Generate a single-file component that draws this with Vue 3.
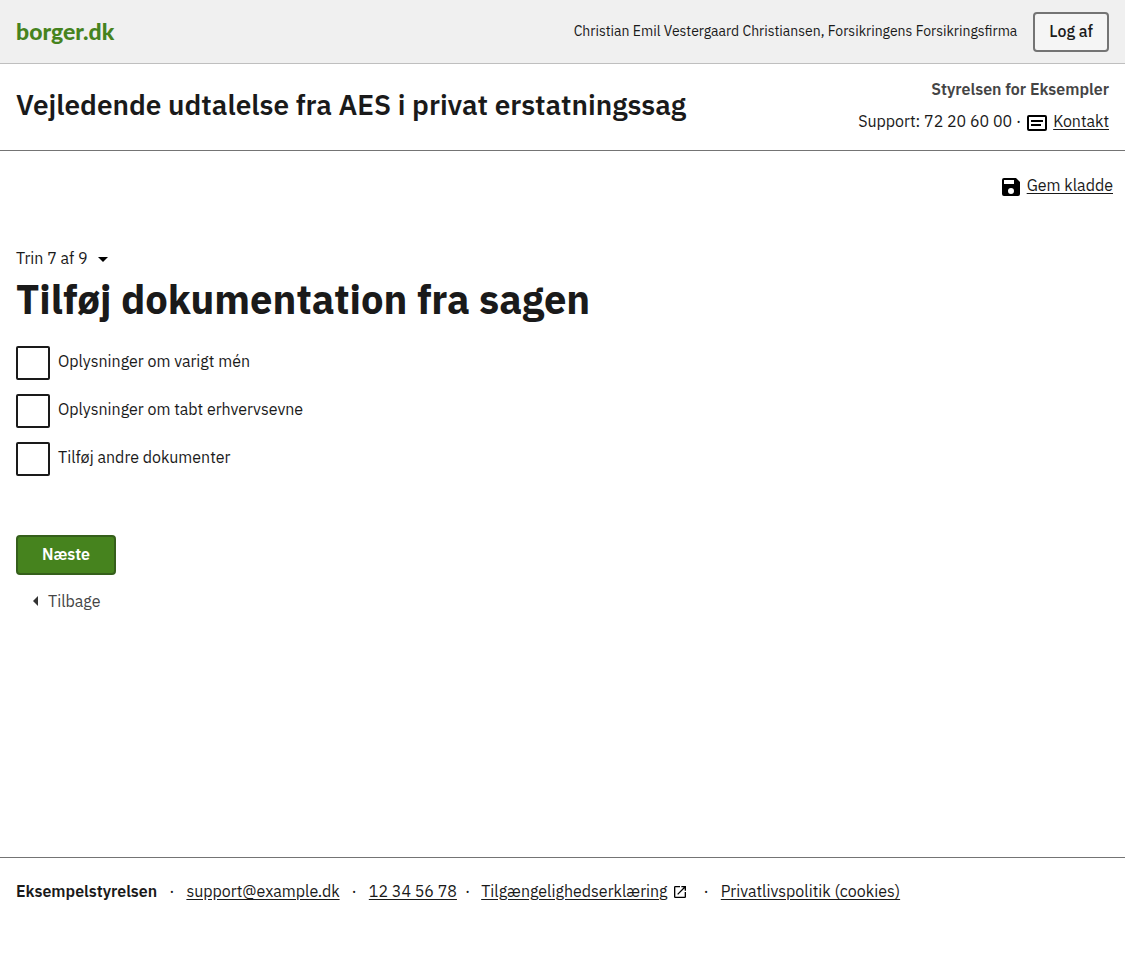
<script setup>
import { ref } from 'vue'

const options = ref([
  { id: 'men', label: 'Oplysninger om varigt mén', checked: false },
  { id: 'erhverv', label: 'Oplysninger om tabt erhvervsevne', checked: false },
  { id: 'andre', label: 'Tilføj andre dokumenter', checked: false },
])
</script>

<template>
  <div class="page">
    <header>
      <div class="topbar">
        <a class="logo" href="#">borger.dk</a>
        <div class="session">
          <span class="user">Christian Emil Vestergaard Christiansen, Forsikringens Forsikringsfirma</span>
          <button class="logout" type="button">Log af</button>
        </div>
      </div>
      <div class="solution">
        <p class="title">Vejledende udtalelse fra AES i privat erstatningssag</p>
        <div class="authority">
          <strong>Styrelsen for Eksempler</strong>
          <div class="support">
            <span>Support: 72 20 60 00 ·</span>
            <svg class="icon" viewBox="0 0 24 24" aria-hidden="true">
              <path fill-rule="evenodd" d="M4 4h16a2 2 0 0 1 2 2v12a2 2 0 0 1-2 2H4a2 2 0 0 1-2-2V6a2 2 0 0 1 2-2zm0 2v12h16V6zm2 3h12v2H6zm0 4h10v2H6z" />
            </svg>
            <a href="#">Kontakt</a>
          </div>
        </div>
      </div>
    </header>

    <main>
      <div class="draft">
        <svg class="icon" viewBox="0 0 24 24" aria-hidden="true">
          <path d="M17 3H5a2 2 0 0 0-2 2v14a2 2 0 0 0 2 2h14a2 2 0 0 0 2-2V7zm-5 16a3 3 0 1 1 0-6 3 3 0 0 1 0 6zm3-10H5V5h10z" />
        </svg>
        <a href="#">Gem kladde</a>
      </div>

      <button class="step" type="button">
        Trin 7 af 9
        <svg class="icon" viewBox="0 0 24 24" aria-hidden="true"><path d="M7 10l5 5 5-5z" /></svg>
      </button>
      <h1>Tilføj dokumentation fra sagen</h1>

      <form @submit.prevent>
        <ul class="options">
          <li v-for="option in options" :key="option.id">
            <input :id="option.id" v-model="option.checked" type="checkbox" />
            <label :for="option.id">{{ option.label }}</label>
          </li>
        </ul>
        <div class="actions">
          <button class="next" type="submit">Næste</button>
          <button class="back" type="button">
            <svg viewBox="0 0 8 12" aria-hidden="true"><path d="M6 1v10L1 6z" /></svg>
            Tilbage
          </button>
        </div>
      </form>
    </main>

    <footer>
      <strong>Eksempelstyrelsen</strong>
      <span class="dot">·</span>
      <a href="#">support@example.dk</a>
      <span class="dot">·</span>
      <a href="#">12 34 56 78</a>
      <span class="dot near">·</span>
      <a href="#">Tilgængelighedserklæring</a>
      <svg class="external" viewBox="0 0 24 24" aria-hidden="true">
        <path d="M19 19H5V5h7V3H5a2 2 0 0 0-2 2v14a2 2 0 0 0 2 2h14a2 2 0 0 0 2-2v-7h-2zM14 3v2h3.59l-9.83 9.83 1.41 1.41L19 6.41V10h2V3z" />
      </svg>
      <span class="dot far">·</span>
      <a href="#">Privatlivspolitik (cookies)</a>
    </footer>
  </div>
</template>

<style>
body {
  margin: 0;
  background: #fff;
}
</style>

<style scoped>
.page {
  box-sizing: border-box;
  display: flex;
  flex-direction: column;
  min-height: 100vh;
  color: #1a1a1a;
  font-family: "IBM Plex Sans", "Open Sans", "Noto Sans", sans-serif;
  font-size: 16px;
  font-weight: 400;
  line-height: 24px;
}

button {
  font: inherit;
  color: inherit;
  cursor: pointer;
}

a {
  color: inherit;
  text-underline-offset: 2px;
}

strong {
  font-weight: 600;
}

.icon {
  width: 24px;
  height: 24px;
  flex: none;
  fill: #000;
}

.topbar {
  display: flex;
  align-items: center;
  justify-content: space-between;
  padding: 12px 16px 11px;
  background: #f0f0f0;
  border-bottom: 1px solid #bfbfbf;
}

.logo {
  padding-bottom: 2px;
  color: #46831e;
  font-family: Lato, sans-serif;
  font-size: 23px;
  font-weight: 900;
  text-decoration: none;
}

.session {
  display: flex;
  align-items: center;
  gap: 16px;
}

.user {
  padding-bottom: 2px;
  font-size: 14px;
}

.logout {
  box-sizing: border-box;
  height: 40px;
  padding: 0 14px 2px;
  background: #f5f5f5;
  border: 2px solid #747474;
  border-radius: 4px;
  font-weight: 500;
}

.solution {
  display: flex;
  align-items: center;
  justify-content: space-between;
  padding: 9px 16px 13px;
  border-bottom: 1px solid #747474;
}

.title {
  margin: 0;
  font-size: 28px;
  font-weight: 600;
  line-height: 40px;
}

.authority {
  display: flex;
  flex-direction: column;
  align-items: flex-end;
}

.authority > * {
  line-height: 32px;
}

.authority strong {
  color: #454545;
}

.support {
  display: flex;
  align-items: center;
  gap: 4px;
}

.support .icon,
.draft .icon {
  margin-top: 4px;
}

main {
  flex: 1;
  padding: 18px 16px 40px;
}

.draft {
  display: flex;
  align-items: center;
  justify-content: flex-end;
  gap: 4px;
  margin-right: -4px;
  line-height: 32px;
}

.step {
  display: flex;
  align-items: center;
  gap: 3px;
  margin-top: 44px;
  padding: 0;
  background: none;
  border: 0;
}

.step .icon {
  margin-top: 2px;
}

h1 {
  margin: 4px 0 23px;
  font-size: 40px;
  font-weight: 700;
  line-height: 48px;
}

.options {
  display: grid;
  gap: 14px;
  margin: 0;
  padding: 0;
  list-style: none;
}

.options li {
  display: flex;
  align-items: center;
  gap: 8px;
}

.options label {
  padding-bottom: 4px;
}

.options input {
  box-sizing: border-box;
  width: 34px;
  height: 34px;
  margin: 0;
  appearance: none;
  background: #fff;
  border: 2px solid #1a1a1a;
  border-radius: 2px;
}

.options input:checked {
  background: #1a1a1a;
  box-shadow: inset 0 0 0 5px #fff;
}

.actions {
  display: flex;
  flex-direction: column;
  align-items: flex-start;
  gap: 14px;
  margin-top: 59px;
}

.next {
  min-width: 100px;
  height: 40px;
  padding: 0 16px 2px;
  background: #46831e;
  border: 2px solid #355f1b;
  border-radius: 4px;
  color: #fff;
  font-weight: 600;
}

.back {
  display: flex;
  align-items: center;
  gap: 8px;
  padding: 0 16px;
  background: none;
  border: 0;
  color: #454545;
}

.back svg {
  width: 8px;
  height: 12px;
  fill: #333;
}

footer {
  display: flex;
  flex-wrap: wrap;
  align-items: center;
  padding: 21px 16px 58px;
  border-top: 1px solid #747474;
}

.dot {
  margin: 0 12px;
}

.dot.near {
  margin: 0 11px 0 8px;
}

.dot.far {
  margin-left: 16px;
}

.external {
  width: 16px;
  height: 16px;
  margin: 2px 0 0 4px;
}
</style>
